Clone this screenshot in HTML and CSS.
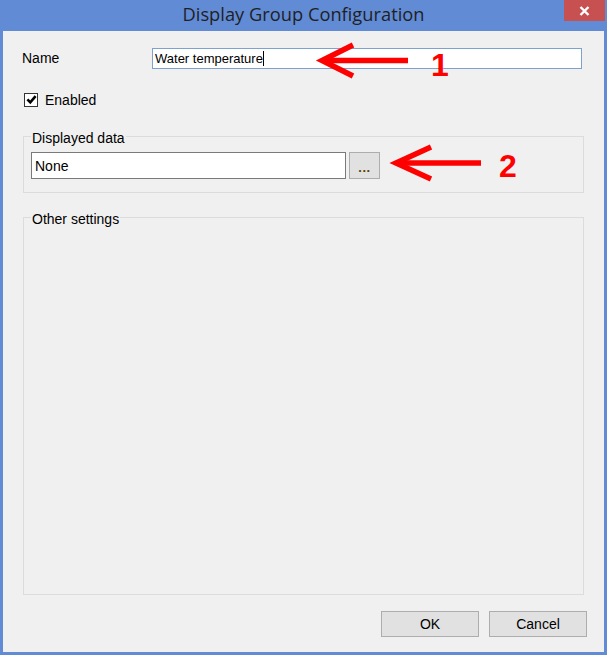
FILE: index.html
```html
<!DOCTYPE html>
<html>
<head>
<meta charset="utf-8">
<link rel="stylesheet" href="styles.css">
</head>
<body>
<div class="window">
  <div class="titlebar">
    <div></div>
    <div class="title">Display Group Configuration</div>
    <div class="close"><svg width="11" height="10" viewBox="0 0 11 10"><path d="M1.5 1 L9.5 9 M9.5 1 L1.5 9" stroke="#fff" stroke-width="2.4" fill="none"/></svg></div>
  </div>
  <div class="client">
    <div class="row-name">
      <span class="label">Name</span>
      <div class="textbox focused">Water temperature<span class="caret"></span></div>
    </div>
    <div class="row-check">
      <span class="checkbox"><svg width="11" height="11" viewBox="0 0 11 11"><path d="M1.4 5.4 L4.3 8.4 L9.6 2.2" stroke="#000" stroke-width="2.6" fill="none"/></svg></span>
      <span class="check-label">Enabled</span>
    </div>
    <fieldset class="group group-data">
      <legend>Displayed data</legend>
      <div class="data-row">
        <div class="textbox dark">None</div>
        <div class="btn-small">...</div>
      </div>
    </fieldset>
    <fieldset class="group group-other">
      <legend>Other settings</legend>
    </fieldset>
    <div class="buttons">
      <div class="btn">OK</div>
      <div class="btn">Cancel</div>
    </div>
  </div>
  <svg class="annotations" width="607" height="655" viewBox="0 0 607 655">
    <g stroke="#ff0000" stroke-width="5.5" fill="none" stroke-linecap="butt" stroke-linejoin="miter">
      <path d="M408 60.5 L323 60.5"/>
      <path d="M353 45 L322 60.5 L353 76"/>
      <path d="M481 163 L397 163"/>
      <path d="M431 147 L396 163 L431 179"/>
    </g>
    <text x="440" y="76" class="num">1</text>
    <text x="508" y="177" class="num">2</text>
  </svg>
</div>
</body>
</html>
```
FILE: styles.css
```css
* { box-sizing: border-box; }
html, body { margin: 0; padding: 0; }
body {
  width: 607px;
  height: 655px;
  overflow: hidden;
  font-family: "Liberation Sans", Arial, sans-serif;
  font-size: 14px;
  color: #000;
}
.window {
  position: relative;
  width: 607px;
  height: 655px;
  background: #628bd6;
  padding: 0 3px 3px 3px;
  display: flex;
  flex-direction: column;
}
.titlebar {
  height: 31px;
  margin: 0 -3px;
  display: grid;
  grid-template-columns: 1fr auto 1fr;
  align-items: start;
}
.title {
  font-family: "Open Sans", "Noto Sans", sans-serif;
  font-size: 18.3px;
  color: #1f1f1f;
  line-height: 20px;
  padding-top: 4px;
}
.close {
  justify-self: end;
  margin-right: 2px;
  width: 41px;
  height: 21px;
  background: #c75050;
  display: flex;
  align-items: center;
  justify-content: center;
}
.close svg { display: block; }
.client {
  flex: 1;
  background: #f0f0f0;
  display: flex;
  flex-direction: column;
  padding: 17px 0 15px 0;
}
.row-name {
  display: grid;
  grid-template-columns: 130px 1fr;
  align-items: center;
  height: 21px;
  padding-left: 19px;
  padding-right: 22px;
}
.label { line-height: 15px; }
.textbox {
  background: #fff;
  border: 1px solid #7a7a7a;
  line-height: 15px;
  padding: 0 2px;
  white-space: nowrap;
  display: flex;
  align-items: center;
}
.textbox.focused {
  height: 21px;
  border-color: #7da2ce;
  font-size: 13px;
}
.caret {
  display: inline-block;
  width: 1px;
  height: 15px;
  background: #000;
  margin-left: 0;
}
.row-check {
  margin-top: 23px;
  height: 15px;
  display: flex;
  align-items: center;
  padding-left: 21px;
}
.checkbox {
  width: 14px;
  height: 14px;
  border: 1px solid #333;
  background: #fff;
  display: flex;
  align-items: center;
  justify-content: center;
}
.checkbox svg { display: block; }
.check-label {
  margin-left: 7px;
  line-height: 15px;
  padding-top: 2px;
}
.group {
  margin: 0 20px;
  border: 1px solid #dcdcdc;
  min-width: 0;
}
.group legend {
  padding: 4px 1px 0 1px;
  line-height: 15px;
  color: #000;
}
.group-data {
  margin-top: 20px;
  padding: 6px 6px 13px 7px;
}
.data-row {
  display: flex;
  gap: 3px;
}
.textbox.dark {
  width: 315px;
  height: 27px;
  border-color: #7a7a7a;
  padding-left: 3px;
  padding-top: 2px;
}
.btn-small {
  width: 31px;
  height: 27px;
  background: #e1e1e1;
  border: 1px solid #adadad;
  display: flex;
  align-items: flex-end;
  justify-content: center;
  padding-bottom: 4px;
  line-height: 13px;
  font-size: 13px;
  font-weight: bold;
  letter-spacing: 0.5px;
  color: #5a4200;
}
.group-other {
  margin-top: 15px;
  flex: 1;
  padding: 0 7px;
}
.buttons {
  margin-top: 16px;
  display: flex;
  justify-content: flex-end;
  gap: 10px;
  padding-right: 17px;
}
.btn {
  width: 98px;
  height: 26px;
  background: #e1e1e1;
  border: 1px solid #adadad;
  display: flex;
  align-items: center;
  justify-content: center;
  line-height: 15px;
}
.annotations {
  position: absolute;
  left: 0;
  top: 0;
  pointer-events: none;
}
.annotations .num {
  font-family: "Liberation Sans", Arial, sans-serif;
  font-weight: bold;
  font-size: 32px;
  fill: #ff0000;
  text-anchor: middle;
}
```
